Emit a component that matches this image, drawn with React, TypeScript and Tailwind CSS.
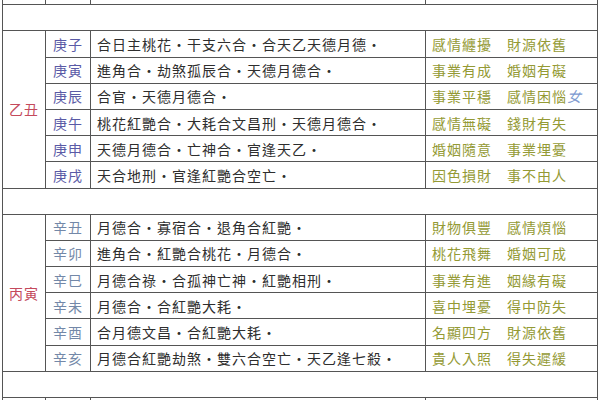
import { Fragment } from 'react'

const groups = [
  {
    label: '乙丑',
    stemColor: 'text-[#5a5aa6]',
    rows: [
      ['庚子', '合日主桃花・干支六合・合天乙天德月德・', '感情纏擾', '財源依舊'],
      ['庚寅', '進角合・劫煞孤辰合・天德月德合・', '事業有成', '婚姻有礙'],
      ['庚辰', '合官・天德月德合・', '事業平穩', '感情困惱'],
      ['庚午', '桃花紅艷合・大耗合文昌刑・天德月德合・', '感情無礙', '錢財有失'],
      ['庚申', '天德月德合・亡神合・官逢天乙・', '婚姻隨意', '事業埋憂'],
      ['庚戌', '天合地刑・官逢紅艷合空亡・', '因色損財', '事不由人'],
    ],
  },
  {
    label: '丙寅',
    stemColor: 'text-[#7388a8]',
    rows: [
      ['辛丑', '月德合・寡宿合・退角合紅艷・', '財物俱豐', '感情煩惱'],
      ['辛卯', '進角合・紅艷合桃花・月德合・', '桃花飛舞', '婚姻可成'],
      ['辛巳', '月德合祿・合孤神亡神・紅艷相刑・', '事業有進', '姻緣有礙'],
      ['辛未', '月德合・合紅艷大耗・', '喜中埋憂', '得中防失'],
      ['辛酉', '合月德文昌・合紅艷大耗・', '名顯四方', '財源依舊'],
      ['辛亥', '月德合紅艷劫煞・雙六合空亡・天乙逢七殺・', '貴人入照', '得失遲緩'],
    ],
  },
]

const cell = 'border border-[#555555]'

function BlankRow() {
  return (
    <tr className="h-[26.2px]">
      <td colSpan={4} className={cell} />
    </tr>
  )
}

function PartialRow() {
  return (
    <tr className="h-[26.2px]">
      <td className={cell} />
      <td className={cell} />
      <td className={cell} />
      <td className={cell} />
    </tr>
  )
}

export default function App() {
  return (
    <div
      className="h-[400px] w-[600px] overflow-hidden bg-white pl-[2px]"
      style={{ fontFamily: '"Noto Sans CJK TC", "Noto Sans CJK SC", sans-serif' }}
    >
      <table className="-mt-[22px] w-[596px] table-fixed border-collapse text-[14px] leading-none tracking-[1px]">
        <colgroup>
          <col className="w-[43px]" />
          <col className="w-[45px]" />
          <col className="w-[335px]" />
          <col />
        </colgroup>
        <tbody>
          <PartialRow />
          {groups.map((g) => (
            <Fragment key={g.label}>
              <BlankRow />
              {g.rows.map((r, i) => (
                <tr key={r[0]} className="h-[26.2px]">
                  {i === 0 && (
                    <td rowSpan={6} className={`${cell} text-center text-[#c44a5c]`}>
                      {g.label}
                    </td>
                  )}
                  <td className={`${cell} text-center ${g.stemColor}`}>{r[0]}</td>
                  <td className={`${cell} pl-[6px] text-[#2e2e2e]`}>{r[1]}</td>
                  <td className={`${cell} pl-[6px] text-[#949a34]`}>
                    {r[2]}
                    <span className="ml-[15px]">{r[3]}</span>
                    {r[0] === '庚辰' && <span className="italic text-[#7d9ad0]">女</span>}
                  </td>
                </tr>
              ))}
            </Fragment>
          ))}
          <BlankRow />
          <PartialRow />
        </tbody>
      </table>
    </div>
  )
}
